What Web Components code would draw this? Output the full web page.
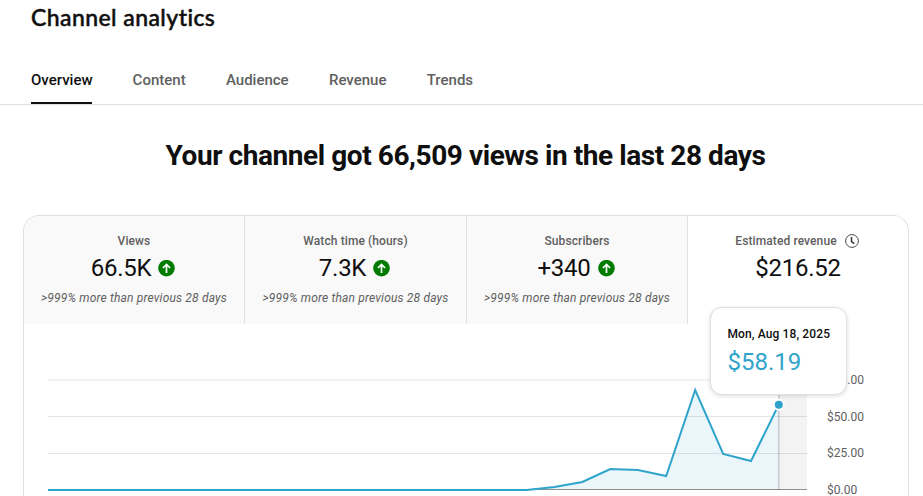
<!DOCTYPE html>
<html lang="en">
<head>
<meta charset="utf-8">
<title>Channel analytics</title>
<style>
  body {
    margin: 0;
    height: 496px;
    overflow: hidden;
    background: #fff;
    color: #0f0f0f;
    font-family: Roboto, "Liberation Sans", sans-serif;
  }
</style>
</head>
<body>
<analytics-page>
  <span slot="title">Channel analytics</span>
  <tab-bar slot="tabs">
    <tab-item selected>Overview</tab-item>
    <tab-item>Content</tab-item>
    <tab-item>Audience</tab-item>
    <tab-item>Revenue</tab-item>
    <tab-item>Trends</tab-item>
  </tab-bar>
  <span slot="headline">Your channel got 66,509 views in the last 28 days</span>
  <metrics-card>
    <metric-tab slot="metric" trend="up">
      <span slot="label">Views</span>66.5K
      <span slot="note">&gt;999% more than previous 28 days</span>
    </metric-tab>
    <metric-tab slot="metric" trend="up">
      <span slot="label">Watch time (hours)</span>7.3K
      <span slot="note">&gt;999% more than previous 28 days</span>
    </metric-tab>
    <metric-tab slot="metric" trend="up">
      <span slot="label">Subscribers</span>+340
      <span slot="note">&gt;999% more than previous 28 days</span>
    </metric-tab>
    <metric-tab slot="metric" selected>
      <span slot="label">Estimated revenue</span>
      <clock-icon slot="label"></clock-icon>$216.52
    </metric-tab>
    <revenue-chart>
      <chart-tooltip>
        <span slot="date">Mon, Aug 18, 2025</span>$58.19
      </chart-tooltip>
    </revenue-chart>
  </metrics-card>
</analytics-page>

<script>
// shared base: clones the class's markup into an open shadow root
class BaseElement extends HTMLElement {
  constructor() {
    super();
    const template = document.createElement('template');
    template.innerHTML = this.constructor.markup;
    this.attachShadow({ mode: 'open' }).append(template.content.cloneNode(true));
  }
}

class AnalyticsPage extends BaseElement {
  static markup = `
    <style>
      :host {
        display: flex;
        flex-direction: column;
      }
      h1 {
        height: 36px;
        margin: 0;
        padding-left: 31px;
        font: 500 23px/35px Lato, "Open Sans", sans-serif;
        letter-spacing: 0.42px;
        -webkit-text-stroke: 0.5px;
        white-space: nowrap;
      }
      h2 {
        height: 36px;
        margin: 33px 0 41px;
        padding-left: 8px;
        font-size: 28px;
        font-weight: 700;
        line-height: 36px;
        letter-spacing: -0.43px;
        text-align: center;
        white-space: nowrap;
      }
    </style>
    <h1><slot name="title"></slot></h1>
    <slot name="tabs"></slot>
    <h2><slot name="headline"></slot></h2>
    <slot></slot>
  `;
}

class TabBar extends BaseElement {
  static markup = `
    <style>
      :host {
        display: flex;
        gap: 40.3px;
        height: 48px;
        padding: 20px 31px 0;
        border-bottom: 1px solid #e0e0e0;
      }
    </style>
    <slot></slot>
  `;
}

class TabItem extends BaseElement {
  static markup = `
    <style>
      :host {
        box-sizing: border-box;
        height: 48px;
        color: #606060;
        font-size: 15px;
        font-weight: 500;
        line-height: 48px;
        white-space: nowrap;
      }
      :host([selected]) {
        width: 61.3px;
        color: #0f0f0f;
        border-bottom: 2px solid #0f0f0f;
      }
    </style>
    <slot></slot>
  `;
}

class MetricsCard extends BaseElement {
  static markup = `
    <style>
      :host {
        display: block;
        width: 884px;
        height: 280px;
        margin-left: 23px;
        border: 1px solid #e0e0e0;
        border-bottom: 0;
        border-radius: 16px 16px 0 0;
      }
      .metrics {
        display: grid;
        grid-template-columns: 221px 222px 221px 220px;
        height: 108px;
        border-radius: 15px 15px 0 0;
        overflow: hidden;
      }
    </style>
    <div class="metrics"><slot name="metric"></slot></div>
    <slot></slot>
  `;
}

class MetricTab extends BaseElement {
  static markup = `
    <style>
      :host {
        display: flex;
        flex-direction: column;
        align-items: center;
        box-sizing: border-box;
        padding-top: 17px;
        background: #f9f9f9;
        border-right: 1px solid #e0e0e0;
        white-space: nowrap;
      }
      :host([selected]) {
        background: #fff;
        border-right: 0;
      }
      .label {
        display: flex;
        align-items: center;
        gap: 8px;
        height: 16px;
        color: #606060;
        font-size: 12px;
        font-weight: 500;
        letter-spacing: 0.1px;
      }
      :host([selected]) .label { padding-right: 2px; }
      .value {
        display: flex;
        align-items: center;
        gap: 7px;
        height: 32px;
        margin-top: 3px;
        color: #0f0f0f;
        font-size: 24px;
        letter-spacing: -0.25px;
      }
      :host([trend="up"]) .value { padding-right: 2px; }
      .note {
        height: 16px;
        margin-top: 6px;
        color: #606060;
        font-size: 12px;
        font-style: italic;
        line-height: 16px;
        letter-spacing: 0.18px;
      }
      svg { display: none; }
      :host([trend="up"]) svg { display: block; }
    </style>
    <div class="label"><slot name="label"></slot></div>
    <div class="value">
      <span><slot></slot></span>
      <svg width="17" height="17" viewBox="0 0 17 17">
        <circle cx="8.5" cy="8.2" r="8.3" fill="#007b00"/>
        <path d="M8.5 13V4.4M4.9 8l3.6-3.6 3.6 3.6" fill="none" stroke="#fff" stroke-width="1.7"/>
      </svg>
    </div>
    <div class="note"><slot name="note"></slot></div>
  `;
}

class ClockIcon extends BaseElement {
  static markup = `
    <style>
      :host { display: flex; }
    </style>
    <svg width="14" height="14" viewBox="0 0 14 14" fill="none" stroke="#333">
      <circle cx="7" cy="7" r="6.4" stroke-width=".9"/>
      <path d="M6.5 3v4.6l2.8 2" stroke-width="1.5"/>
    </svg>
  `;
}

class RevenueChart extends BaseElement {
  static markup = `
    <style>
      :host {
        display: grid;
        grid-template-columns: 759px 1fr;
        column-gap: 20px;
        position: relative;
        height: 172px;
        padding-left: 24px;
      }
      .scale {
        display: flex;
        flex-direction: column;
        gap: 20.6px;
        padding-top: 48px;
        color: #606060;
        font-size: 12px;
        line-height: 16px;
      }
      .scale span:last-child { height: 14px; }
      /* hovers over the plot */
      ::slotted(chart-tooltip) {
        position: absolute;
      }
    </style>
    <svg width="759" height="172" viewBox="0 0 759 172">
      <rect x="731" y="56" width="28" height="110" fill="#f3f3f3"/>
      <rect y="55" width="759" height="2" fill="#f2f2f2"/>
      <g fill="#000" fill-opacity=".1">
        <rect y="92" width="759" height="1"/>
        <rect y="129" width="759" height="1"/>
      </g>
      <path class="area" fill="#2fa4cb" fill-opacity=".1"/>
      <rect y="165" width="759" height="1" fill="#909090"/>
      <rect x="730" y="56" width="1.5" height="110" fill="#000" fill-opacity=".18"/>
      <path class="line" fill="none" stroke="#2fa4cb" stroke-width="2"/>
      <circle cx="730.8" cy="80.8" r="5" fill="#2fa4cb" stroke="#fff" stroke-width="2"/>
    </svg>
    <div class="scale">
      <span>$75.00</span>
      <span>$50.00</span>
      <span>$25.00</span>
      <span>$0.00</span>
    </div>
    <slot></slot>
  `;

  connectedCallback() {
    const points = [
      [0, 166], [478.7, 166], [506.5, 163], [534.3, 158], [562.3, 145],
      [590, 146], [618.2, 152], [647.2, 66], [675.2, 130], [703, 137],
      [730.7, 80.8]
    ];
    const line = 'M' + points.map((p) => p.join(' ')).join('L');
    this.shadowRoot.querySelector('.line').setAttribute('d', line);
    this.shadowRoot.querySelector('.area').setAttribute('d', line + 'V166H0Z');
  }
}

class ChartTooltip extends BaseElement {
  static markup = `
    <style>
      :host {
        display: block;
        top: -17px;
        left: 686px;
        box-sizing: border-box;
        width: 137px;
        height: 88px;
        padding: 18px 0 0 16.5px;
        background: #fff;
        border: 1px solid #e0e0e0;
        border-radius: 12px;
        box-shadow: 0 1px 4px rgba(0, 0, 0, .14);
        white-space: nowrap;
      }
      .date {
        height: 16px;
        font-size: 12px;
        font-weight: 500;
        line-height: 16px;
        letter-spacing: 0.12px;
      }
      .amount {
        height: 32px;
        margin-top: 4px;
        color: #2fa4cb;
        font-size: 24px;
        line-height: 32px;
      }
    </style>
    <div class="date"><slot name="date"></slot></div>
    <div class="amount"><slot></slot></div>
  `;
}

customElements.define('analytics-page', AnalyticsPage);
customElements.define('tab-bar', TabBar);
customElements.define('tab-item', TabItem);
customElements.define('metrics-card', MetricsCard);
customElements.define('metric-tab', MetricTab);
customElements.define('clock-icon', ClockIcon);
customElements.define('revenue-chart', RevenueChart);
customElements.define('chart-tooltip', ChartTooltip);
</script>
</body>
</html>
